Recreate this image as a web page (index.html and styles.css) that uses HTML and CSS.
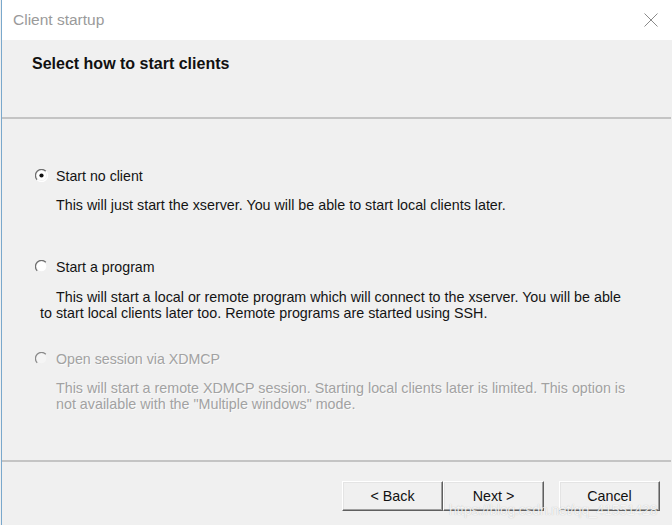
FILE: index.html
```html
<!DOCTYPE html>
<html>
<head>
<meta charset="utf-8">
<link rel="stylesheet" href="styles.css">
</head>
<body>
<div class="window">
  <div class="titlebar">
    <span class="title">Client startup</span>
    <svg class="close" width="14" height="14" viewBox="0 0 14 14"><path d="M0.5 0.5 L13.5 13.5 M13.5 0.5 L0.5 13.5" stroke="#8a8a8a" stroke-width="1" fill="none"/></svg>
  </div>
  <div class="header">
    <h1 class="heading">Select how to start clients</h1>
  </div>
  <div class="sep"></div>
  <div class="content">
    <div class="option">
      <div class="opt-row">
        <svg class="radio" width="13" height="13" viewBox="0 0 13 13">
          <path d="M10.8 2.2 A6 6 0 1 0 2.2 10.8" stroke="#6f6f6f" stroke-width="1.3" fill="none"/>
          <path d="M2.2 10.8 A6 6 0 0 0 10.8 2.2" stroke="#ffffff" stroke-width="1.3" fill="none"/>
          <circle cx="6.5" cy="6.5" r="4.8" fill="#ffffff"/>
          <circle cx="6.5" cy="6.5" r="2.1" fill="#111"/>
        </svg>
        <span class="label">Start no client</span>
      </div>
      <p class="desc">This will just start the xserver. You will be able to start local clients later.</p>
    </div>
    <div class="option">
      <div class="opt-row">
        <svg class="radio" width="13" height="13" viewBox="0 0 13 13">
          <path d="M10.8 2.2 A6 6 0 1 0 2.2 10.8" stroke="#6f6f6f" stroke-width="1.3" fill="none"/>
          <circle cx="6.5" cy="6.5" r="4.8" fill="#ffffff"/>
        </svg>
        <span class="label">Start a program</span>
      </div>
      <p class="desc desc-hang">This will start a local or remote program which will connect to the xserver. You will be able<br>to start local clients later too. Remote programs are started using SSH.</p>
    </div>
    <div class="option disabled">
      <div class="opt-row">
        <svg class="radio" width="13" height="13" viewBox="0 0 13 13">
          <path d="M10.8 2.2 A6 6 0 1 0 2.2 10.8" stroke="#8a8a8a" stroke-width="1.3" fill="none"/>
          <circle cx="6.5" cy="6.5" r="4.8" fill="#f5f5f5"/>
        </svg>
        <span class="label">Open session via XDMCP</span>
      </div>
      <p class="desc">This will start a remote XDMCP session. Starting local clients later is limited. This option is<br>not available with the "Multiple windows" mode.</p>
    </div>
  </div>
  <div class="sep"></div>
  <div class="footer">
    <div class="btn-pair">
      <button class="btn">&lt; Back</button>
      <button class="btn">Next &gt;</button>
    </div>
    <button class="btn">Cancel</button>
    <span class="watermark">https://blog.csdn.net/qq_41551428</span>
  </div>
</div>
</body>
</html>
```
FILE: styles.css
```css
html, body {
  margin: 0;
  padding: 0;
  background: #f0f0f0;
}
body {
  width: 672px;
  height: 525px;
  overflow: hidden;
  font-family: "Liberation Sans", Arial, sans-serif;
}
.window {
  margin-left: 1px;
  border-left: 1px solid #7aa8cc;
  height: 525px;
  background: #f0f0f0;
  display: flex;
  flex-direction: column;
}
.titlebar {
  height: 40px;
  flex: none;
  background: #ffffff;
  display: flex;
  align-items: center;
  justify-content: space-between;
  padding: 0 14px 0 11px;
}
.title {
  font-size: 15.5px;
  color: #9a9a9a;
}
.close {
  display: block;
}
.header {
  height: 77px;
  flex: none;
  padding-left: 30px;
}
.heading {
  margin: 15px 0 0;
  font-size: 16px;
  font-weight: bold;
  line-height: 18px;
  color: #111;
}
.sep {
  height: 2px;
  flex: none;
  background: #c4c4c4;
  margin-right: 1px;
}
.content {
  padding: 48px 0 0 34px;
  height: 341px;
  flex: none;
  box-sizing: border-box;
}
.option {
  height: 91.5px;
}
.opt-row {
  display: flex;
  align-items: center;
  height: 16px;
}
.radio {
  display: block;
  margin-right: 8px;
  margin-left: -1px;
}
.label {
  font-size: 14.2px;
  line-height: 16px;
  color: #141414;
  margin-top: 1px;
}
.desc {
  margin: 14px 0 0 20px;
  font-size: 14.3px;
  line-height: 16px;
  color: #141414;
}
.desc-hang {
  margin-left: 4px;
  text-indent: 16px;
}
.disabled .label,
.disabled .desc {
  color: #a2a2a2;
  text-shadow: 1px 1px 0 rgba(255,255,255,0.7);
}
.footer {
  position: relative;
  flex: none;
  display: flex;
  align-items: flex-start;
  padding: 19px 0 0 340px;
  gap: 15px;
}
.btn-pair {
  display: flex;
}
.btn {
  width: 101px;
  height: 30px;
  box-sizing: border-box;
  background: #f0f0f0;
  border: 1px solid;
  border-color: #ffffff #5f5f5f #5f5f5f #ffffff;
  box-shadow: inset -1px -1px 0 #a0a0a0, inset 1px 1px 0 #e4e4e4;
  font-family: "Liberation Sans", Arial, sans-serif;
  font-size: 14.3px;
  color: #111;
  padding: 0;
}
.watermark {
  position: absolute;
  left: 447px;
  top: 40px;
  font-size: 14px;
  color: rgba(255,255,255,0.85);
  text-shadow: 0 0 1px rgba(0,0,0,0.25);
  letter-spacing: -0.2px;
}
```
